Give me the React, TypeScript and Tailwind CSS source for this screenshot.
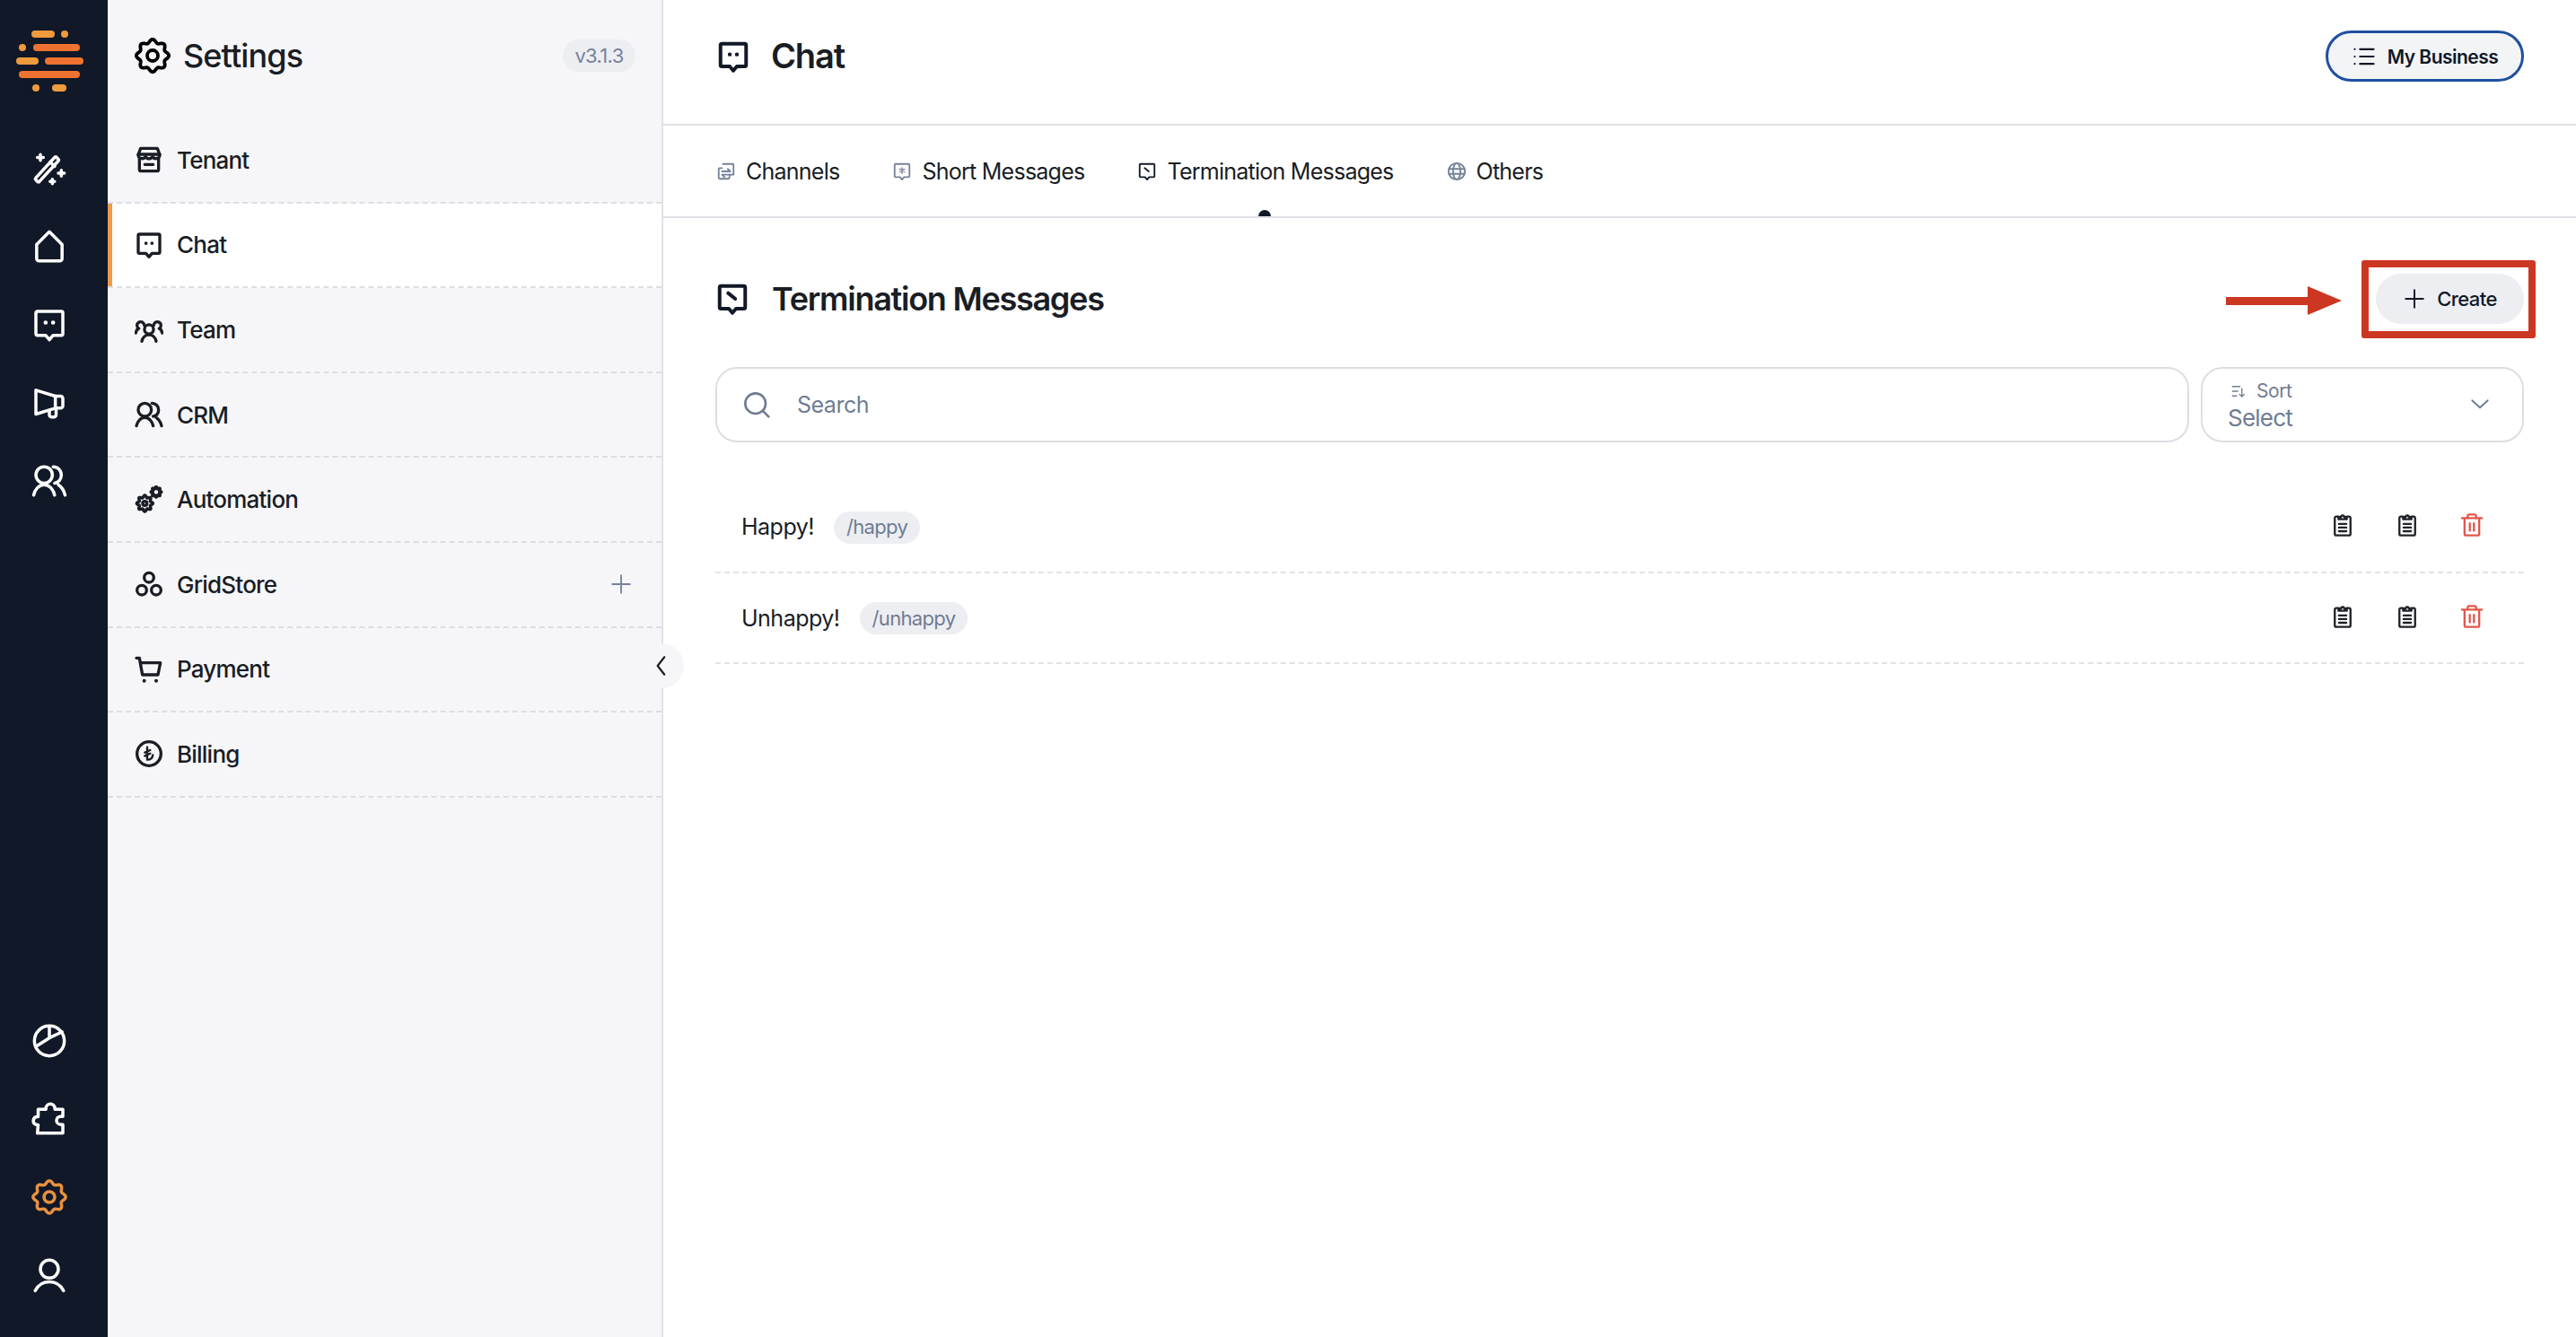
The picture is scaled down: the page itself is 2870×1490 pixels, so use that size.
import type { ReactNode } from "react";

// wavy gear outline, same shape in every size
function gearPath(cx: number, cy: number, r: number, amp: number, lobes: number) {
  const pts: string[] = [];
  for (let i = 0; i < 96; i++) {
    const a = (i / 96) * Math.PI * 2;
    const rad = r + amp * Math.cos(lobes * a);
    pts.push(`${(cx + rad * Math.sin(a)).toFixed(2)} ${(cy - rad * Math.cos(a)).toFixed(2)}`);
  }
  return `M${pts.join("L")}Z`;
}

function Icon({ size = 30, sw = 2.2, className = "", children }: { size?: number; sw?: number; className?: string; children: ReactNode }) {
  return (
    <svg
      width={size}
      height={size}
      viewBox="0 0 24 24"
      fill="none"
      stroke="currentColor"
      strokeWidth={sw}
      strokeLinecap="round"
      strokeLinejoin="round"
      className={`shrink-0 ${className}`}
    >
      {children}
    </svg>
  );
}

const bubble = "M4 3h16a1 1 0 0 1 1 1v14a1 1 0 0 1-1 1h-5.5L12 22l-2.5-3H4a1 1 0 0 1-1-1V4a1 1 0 0 1 1-1z";

const glyphs: Record<string, ReactNode> = {
  wand: (
    <>
      <path d="M4 20.500l-1-1a1 1 0 0 1 0-1.400L15.500 4.500a1 1 0 0 1 1.400 0l1 1a1 1 0 0 1 0 1.400L5.400 20.500a1 1 0 0 1-1.400 0z" />
      <path d="M12.500 7.500l3 3" />
      <path d="M6 2.500v4M4 4.500h4M20 13v4M18 15h4M14 19v3M12.500 20.500h3" />
    </>
  ),
  home: <path d="M3.500 10.500L12 2l8.500 8.500V20a1.500 1.500 0 0 1-1.500 1.500H5A1.500 1.500 0 0 1 3.500 20z" />,
  chat: (
    <>
      <path d={bubble} />
      <path d="M9.500 10.500v.01M14.500 10.500v.01" strokeWidth={2.8} />
    </>
  ),
  term: (
    <>
      <path d={bubble} />
      <path d="M9 8l5 4" />
    </>
  ),
  short: (
    <>
      <path d={bubble} />
      <path d="M12 7.500v7M9 9.200l6 3.600M15 9.200l-6 3.600" strokeWidth={1.500} />
    </>
  ),
  mega: (
    <>
      <path d="M3 3.500l13 4h3.500a1.500 1.500 0 0 1 1.500 1.500v5a1.500 1.500 0 0 1-1.500 1.500H16l-13 4z" />
      <path d="M16 7.500v8M12 17v3a1.500 1.500 0 0 0 1.500 1.500H15a1.500 1.500 0 0 0 1.500-1.500v-3" />
    </>
  ),
  crm: (
    <>
      <circle cx="8.500" cy="8" r="5.500" />
      <path d="M1.500 21.500c.8-3.800 3.500-7 7-7s6.200 3.200 7 7" />
      <path d="M14.500 2.500c3.200 0 5.500 2.500 5.500 5.500s-2 5-4.500 5.500M18 14.500c2 1.300 3.800 3.800 4.500 7" />
    </>
  ),
  team: (
    <>
      <circle cx="12" cy="12" r="3.800" />
      <path d="M6 22c.6-3 3-5.500 6-5.500s5.400 2.500 6 5.500" />
      <path d="M8 8.500a3 3 0 1 0-4.500 2.800C2 12 1.200 13.300 1 15M16 8.500a3 3 0 1 1 4.500 2.800c1.500.7 2.300 2 2.500 3.700" />
    </>
  ),
  pie: (
    <>
      <circle cx="12" cy="12" r="10" />
      <path d="M12 2.500v7.500L3.500 15.500M12 10l8.500-4" />
    </>
  ),
  puzzle: (
    <path d="M4 21.500h17v-5.800h-1.500a2.700 2.700 0 0 1 0-5.400H21V5.500h-5.300V5a3 3 0 0 0-6 0v.5H4.500v5H4a2.700 2.700 0 0 0-1 5.200l1.500.3z" />
  ),
  user: (
    <>
      <circle cx="12" cy="8" r="6" />
      <path d="M2.500 22.500c1.800-3.600 5.300-6 9.500-6s7.700 2.400 9.500 6" />
    </>
  ),
  gear: (
    <>
      <path d={gearPath(12, 12, 9.800, 1.100, 8)} />
      <circle cx="12" cy="12" r="3.600" />
    </>
  ),
  store: (
    <>
      <path d="M4 11v9a1.500 1.500 0 0 0 1.500 1.500h13A1.500 1.500 0 0 0 20 20v-9" />
      <path d="M5 2.500h14l2 5.500a3 3 0 0 1-3 3 3 3 0 0 1-3-1.500 3.500 3.500 0 0 1-6 0A3 3 0 0 1 6 11a3 3 0 0 1-3-3z" />
      <path d="M3 7.500h18M8.500 16h7" />
    </>
  ),
  auto: (
    <>
      <path d={gearPath(8.500, 15, 5.800, 1, 8)} />
      <circle cx="8.500" cy="15" r="1.800" />
      <path d={gearPath(18, 5.500, 3.600, .8, 8)} />
    </>
  ),
  grid: (
    <>
      <circle cx="12" cy="6.500" r="4" />
      <circle cx="6" cy="17" r="4" />
      <circle cx="18" cy="17" r="4" />
    </>
  ),
  cart: (
    <>
      <path d="M1.500 2.500H4l2.500 14h13l2-10H5" />
      <path d="M8 21.500v.01M18 21.500v.01" strokeWidth={3} />
    </>
  ),
  bill: (
    <>
      <circle cx="12" cy="12" r="10" />
      <path d="M10.500 6.500V17c2.800 0 4.500-1.500 4.700-4M8.500 11l4.500-2M8.500 13.800l4.500-2" strokeWidth={1.800} />
    </>
  ),
  channels: (
    <>
      <path d="M8 3h12a1 1 0 0 1 1 1v12h-4M7 8H4a1 1 0 0 0-1 1v11a1 1 0 0 0 1 1h11a1 1 0 0 0 1-1v-3" />
      <path d="M7 12h10l-3-3M17 16H7l3 3" />
    </>
  ),
  globe: (
    <>
      <circle cx="12" cy="12" r="10" />
      <ellipse cx="12" cy="12" rx="4.500" ry="10" />
      <path d="M2.500 9h19M2.500 15h19" />
    </>
  ),
  clip: (
    <>
      <path d="M8 4H6a1.500 1.500 0 0 0-1.500 1.500v15A1.500 1.500 0 0 0 6 22h12a1.500 1.500 0 0 0 1.500-1.500v-15A1.500 1.500 0 0 0 18 4h-2" />
      <path d="M8 6.500V4.500h2.500a1.500 1.500 0 0 1 3 0H16v2z" />
      <path d="M8.500 11h7M8.500 14.500h7M8.500 18h7" />
    </>
  ),
  trash: (
    <>
      <path d="M2.500 5.500h19M5 6v14.500A1.500 1.500 0 0 0 6.500 22h11a1.500 1.500 0 0 0 1.500-1.500V6" />
      <path d="M8 5.500V3.500A1.500 1.500 0 0 1 9.500 2h5A1.500 1.500 0 0 1 16 3.500v2M10 10.500v7M14 10.500v7" />
    </>
  ),
  list: <path d="M8 5h13M8 12h13M8 19h13M3 5h.01M3 12h.01M3 19h.01" />,
  plus: <path d="M12 3v18M3 12h18" />,
  search: (
    <>
      <circle cx="11" cy="11" r="8.500" />
      <path d="M17.500 17.500l4.500 4.500" />
    </>
  ),
  sort: <path d="M3 5h11M3 12h8M3 19h6M17 8v12M13.500 16.500L17 20l3.500-3.500" />,
  down: <path d="M4 8.500l8 7.500 8-7.500" />,
  left: <path d="M15 3l-7 9 7 9" />,
};

const railTop = ["wand", "home", "chat", "mega", "crm"];
const railBottom = ["pie", "puzzle", "gear", "user"];

const settings = [
  { label: "Tenant", icon: "store" },
  { label: "Chat", icon: "chat", active: true },
  { label: "Team", icon: "team" },
  { label: "CRM", icon: "crm" },
  { label: "Automation", icon: "auto" },
  { label: "GridStore", icon: "grid", plus: true },
  { label: "Payment", icon: "cart" },
  { label: "Billing", icon: "bill" },
];

const tabs = [
  { label: "Channels", icon: "channels", gray: true },
  { label: "Short Messages", icon: "short", gray: true },
  { label: "Termination Messages", icon: "term", active: true },
  { label: "Others", icon: "globe", gray: true },
];

const messages = [
  { name: "Happy!", tag: "/happy" },
  { name: "Unhappy!", tag: "/unhappy" },
];

function Logo() {
  const light = "bg-[#f09a3e]";
  const deep = "bg-[#ee7330]";
  return (
    <div className="flex h-[68px] w-[75px] flex-col justify-between">
      <div className="flex h-[8px] gap-[7px] pl-[17px]">
        <div className={`w-[26px] rounded-full ${light}`} />
        <div className={`w-[8px] rounded-full ${light}`} />
      </div>
      <div className="flex h-[8px] gap-[8px] pl-[3px]">
        <div className={`w-[8px] rounded-full ${light}`} />
        <div className={`w-[52px] rounded-full ${deep}`} />
      </div>
      <div className="flex h-[8px] gap-[7px]">
        <div className={`w-[25px] rounded-full ${light}`} />
        <div className={`w-[43px] rounded-full ${deep}`} />
      </div>
      <div className="flex h-[8px] pl-[3px]">
        <div className={`w-[68px] rounded-full ${deep}`} />
      </div>
      <div className="flex h-[8px] gap-[14px] pl-[18px]">
        <div className={`w-[8px] rounded-full ${light}`} />
        <div className={`w-[16px] rounded-full ${light}`} />
      </div>
    </div>
  );
}

function Rail() {
  return (
    <aside className="flex w-[120px] shrink-0 flex-col items-center bg-[#111827] pt-[34px] pr-[10px] pb-[26px] text-white">
      <Logo />
      <nav className="mt-[42px] flex flex-col">
        {railTop.map((name) => (
          <div key={name} className="flex h-[87px] items-center justify-center">
            <Icon size={40} sw={2.100}>{glyphs[name]}</Icon>
          </div>
        ))}
      </nav>
      <nav className="mt-auto flex flex-col">
        {railBottom.map((name) => (
          <div key={name} className={`flex h-[87px] items-center justify-center ${name === "gear" ? "text-[#e8913f]" : ""}`}>
            <Icon size={40} sw={2.100}>{glyphs[name]}</Icon>
          </div>
        ))}
      </nav>
    </aside>
  );
}

function SettingsPanel() {
  return (
    <aside className="relative w-[619px] shrink-0 border-r-2 border-[#dfe1e6] bg-[#f6f6f9]">
      <div className="flex h-[132px] items-start justify-between pt-[42px] pr-[29px] pl-[30px]">
        <div className="flex h-[40px] items-center gap-[14px]">
          <Icon size={40} sw={2.300}>{glyphs.gear}</Icon>
          <span className="text-[36px] font-medium tracking-[-0.025em] text-[#1a1d24]">Settings</span>
        </div>
        <span className="mt-[2px] flex h-[36px] w-[81px] items-center justify-center rounded-full bg-[#eceef2] text-[22px] tracking-[-0.03em] text-[#76829a]">
          v3.1.3
        </span>
      </div>
      {settings.map((item) => (
        <div
          key={item.label}
          className={`relative flex h-[94.6px] items-center justify-between border-b-2 border-dashed border-[#dcdee3] pr-[30px] pl-[30px] ${
            item.active ? "bg-white" : ""
          }`}
        >
          {item.active && <div className="absolute inset-y-0 left-0 w-[5px] bg-[#ef9a4c]" />}
          <div className="flex items-center gap-[15px] text-[#1a1d24]">
            <Icon size={32} sw={2.500}>{glyphs[item.icon]}</Icon>
            <span className="text-[26px] font-medium tracking-[-0.03em]">{item.label}</span>
          </div>
          {item.plus && <Icon size={26} sw={1.700} className="mr-[2px] text-[#76829a]">{glyphs.plus}</Icon>}
        </div>
      ))}
      <button className="absolute top-[717px] right-[-25px] flex h-[50px] w-[50px] items-center justify-center rounded-full bg-[#f6f6f9] text-[#1a1d24]">
        <Icon size={26} sw={2}>{glyphs.left}</Icon>
      </button>
    </aside>
  );
}

function MessageRow({ name, tag }: { name: string; tag: string }) {
  return (
    <div className="flex h-[101.5px] items-center justify-between border-b-2 border-dashed border-[#e1e3e7] pr-[44px] pl-[29px]">
      <div className="flex items-center gap-[22px] pt-[2px]">
        <span className="text-[25px] tracking-[-0.02em] text-[#1a1d24]">{name}</span>
        <span className="flex h-[36px] items-center rounded-full bg-[#eceef2] px-[14px] text-[22px] tracking-[-0.03em] text-[#707c92]">
          {tag}
        </span>
      </div>
      <div className="flex items-center gap-[44px] pb-[3px]">
        <Icon size={28} sw={2} className="text-[#1f2228]">{glyphs.clip}</Icon>
        <Icon size={28} sw={2} className="text-[#1f2228]">{glyphs.clip}</Icon>
        <Icon size={28} sw={2} className="text-[#e2574c]">{glyphs.trash}</Icon>
      </div>
    </div>
  );
}

export default function App() {
  return (
    <div className="flex h-[1490px] w-[2870px] overflow-hidden bg-white font-['Inter',sans-serif]">
      <Rail />
      <SettingsPanel />
      <main className="flex min-w-0 flex-1 flex-col">
        <header className="flex h-[140px] shrink-0 items-center justify-between border-b-2 border-[#dfe1e6] pr-[58px] pb-[13px] pl-[59px]">
          <div className="flex items-center gap-[23px]">
            <Icon size={38} sw={2.500} className="text-[#111827]">{glyphs.chat}</Icon>
            <span className="text-[38px] font-semibold tracking-[-0.03em] text-[#1a1d24]">Chat</span>
          </div>
          <button className="flex h-[57px] w-[221px] items-center justify-center gap-[12px] rounded-full border-[3px] border-[#1f4f9f] bg-[#f3f4f6]">
            <Icon size={28} sw={1.900} className="text-[#111827]">{glyphs.list}</Icon>
            <span className="pt-[2px] text-[21px] font-semibold tracking-[-0.025em] text-[#111827]">My Business</span>
          </button>
        </header>

        <div className="flex h-[103px] shrink-0 items-center gap-[59px] border-b-2 border-[#dfe1e6] pl-[59px]">
          {tabs.map((tab) => (
            <div key={tab.label} className="relative flex h-full items-center gap-[11px]">
              <Icon size={22} sw={2} className={tab.gray ? "text-[#76829a]" : "text-[#111827]"}>{glyphs[tab.icon]}</Icon>
              <span className="pt-[3px] text-[25px] tracking-[-0.03em] text-[#1a1d24]">{tab.label}</span>
              {tab.active && <div className="absolute bottom-0 left-[135px] h-[7px] w-[14px] rounded-t-full bg-[#111827]" />}
            </div>
          ))}
        </div>

        <section className="flex flex-1 flex-col px-[58px] pt-[62px]">
          <div className="flex h-[56px] items-center justify-between">
            <div className="flex items-center gap-[25px]">
              <Icon size={38} sw={2.500} className="text-[#111827]">{glyphs.term}</Icon>
              <span className="text-[36px] font-semibold tracking-[-0.035em] text-[#1a1d24]">Termination Messages</span>
            </div>
            <div className="relative">
              <button className="flex h-[56px] w-[165px] items-center justify-center gap-[12px] rounded-full bg-[#edeef2]">
                <Icon size={26} sw={1.800} className="text-[#111827]">{glyphs.plus}</Icon>
                <span className="text-[22px] font-medium tracking-[-0.025em] text-[#111827]">Create</span>
              </button>
              {/* annotation on top of the screenshot */}
              <div className="absolute top-[-15px] right-[-13px] bottom-[-16px] left-[-16px] rounded-[3px] border-8 border-[#cc3722]" />
              <svg width="129" height="32" viewBox="0 0 129 32" className="absolute top-[14px] left-[-167px]">
                <path d="M0 12h91V0l38 16-38 16V21H0z" fill="#cc3722" />
              </svg>
            </div>
          </div>

          <div className="mt-[48px] flex h-[84px] gap-[13px]">
            <div className="flex flex-1 items-center gap-[29px] rounded-[24px] border-2 border-[#dcdee3] pl-[28px]">
              <Icon size={32} sw={2} className="text-[#707c92]">{glyphs.search}</Icon>
              <span className="pt-[2px] text-[25px] tracking-[-0.02em] text-[#707c92]">Search</span>
            </div>
            <div className="flex w-[360px] items-center justify-between rounded-[24px] border-2 border-[#dcdee3] pr-[34px] pl-[28px]">
              <div className="flex flex-col pt-[2px] text-[#707c92]">
                <div className="flex h-[27px] items-center gap-[11px] pl-[3px]">
                  <Icon size={18} sw={1.800}>{glyphs.sort}</Icon>
                  <span className="text-[21px] tracking-[-0.02em]">Sort</span>
                </div>
                <span className="text-[26px] leading-[32px] tracking-[-0.03em]">Select</span>
              </div>
              <Icon size={26} sw={1.800} className="mb-[2px] text-[#707c92]">{glyphs.down}</Icon>
            </div>
          </div>

          <div className="mt-[44px] flex flex-col">
            {messages.map((m) => (
              <MessageRow key={m.name} name={m.name} tag={m.tag} />
            ))}
          </div>
        </section>
      </main>
    </div>
  );
}
